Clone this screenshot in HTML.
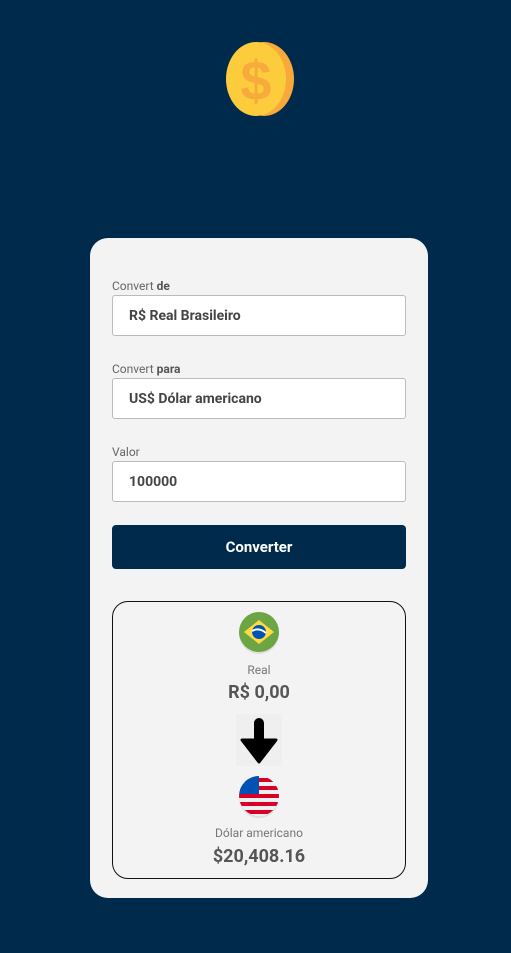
<!DOCTYPE html>
<html><head><style>
body{margin:0;width:511px;height:953px;background:#002a4c;font-family:Roboto,"Liberation Sans",sans-serif;position:relative;overflow:hidden}
.card{position:absolute;left:90px;top:238px;width:338px;height:660px;background:#f3f3f3;border-radius:18px}
.lbl{position:absolute;left:112px;font-size:12px;color:#666}
.lbl b{color:#555}
.inp{position:absolute;left:112px;width:291px;height:41px;background:#fff;border:1px solid #bbb;border-radius:3px;font-size:14px;font-weight:bold;color:#444;line-height:41px;padding-left:16px;box-sizing:border-box;width:294px}
.btn{position:absolute;left:112px;top:525px;width:294px;height:44px;background:#002a4c;border-radius:4px;color:#fff;font-weight:bold;font-size:15px;text-align:center;line-height:44px}
.res{position:absolute;left:112px;top:601px;width:294px;height:278px;border:1px solid #111;border-radius:16px;box-sizing:border-box}
.c{position:absolute;left:112px;width:294px;text-align:center}
</style></head><body>
<svg style="position:absolute;left:222px;top:40px" width="76" height="78" viewBox="0 0 76 78">
<ellipse cx="42" cy="39" rx="30" ry="37" fill="#f7a93a"/>
<ellipse cx="34" cy="39" rx="30" ry="37" fill="#fdcc3d"/>
<text x="34" y="60" font-size="56" font-weight="bold" text-anchor="middle" fill="#f7ab3a" font-family="Liberation Sans">$</text>
</svg>
<div class="card"></div>
<div class="lbl" style="top:279px">Convert <b>de</b></div>
<div class="inp" style="top:295px">R$ Real Brasileiro</div>
<div class="lbl" style="top:362px">Convert <b>para</b></div>
<div class="inp" style="top:378px">US$ Dólar americano</div>
<div class="lbl" style="top:445px">Valor</div>
<div class="inp" style="top:461px">100000</div>
<div class="btn">Converter</div>
<div class="res"></div>
<svg style="position:absolute;left:238px;top:612px" width="44" height="44" viewBox="0 0 44 44">
<circle cx="21" cy="22" r="20" fill="#ccc" opacity=".5"/>
<circle cx="21" cy="20" r="20" fill="#6da544"/>
<polygon points="21,8 36,20 21,32 6,20" fill="#ffda44"/>
<circle cx="21" cy="20" r="7" fill="#0052b4"/>
<path d="M14 19 Q21 15 28 21" stroke="#fff" stroke-width="2" fill="none"/>
</svg>
<div class="c" style="top:663px;font-size:12px;color:#777">Real</div>
<div class="c" style="top:682px;font-size:18px;font-weight:bold;color:#555">R$ 0,00</div>
<div style="position:absolute;left:236px;top:714px;width:46px;height:52px;background:#efefef"></div>
<svg style="position:absolute;left:240px;top:716px" width="38" height="48" viewBox="0 0 38 48">
<rect x="14" y="2" width="10" height="26" rx="5" fill="#000"/>
<polygon points="2,24 36,24 19,46" fill="#000" stroke="#000" stroke-width="3" stroke-linejoin="round"/>
</svg>
<svg style="position:absolute;left:238px;top:776px" width="44" height="44" viewBox="0 0 44 44">
<defs><clipPath id="k"><circle cx="21" cy="20" r="20"/></clipPath></defs>
<circle cx="21" cy="22" r="20" fill="#ccc" opacity=".5"/>
<g clip-path="url(#k)"><rect width="44" height="44" fill="#f0f0f0"/>
<rect y="2" width="44" height="4" fill="#d80027"/><rect y="10" width="44" height="4" fill="#d80027"/><rect y="18" width="44" height="4" fill="#d80027"/><rect y="26" width="44" height="4" fill="#d80027"/><rect y="34" width="44" height="4" fill="#d80027"/>
<rect width="21" height="18" fill="#0052b4"/></g>
</svg>
<div class="c" style="top:826px;font-size:12px;color:#777">Dólar americano</div>
<div class="c" style="top:846px;font-size:18px;font-weight:bold;color:#555">$20,408.16</div>
</body></html>
